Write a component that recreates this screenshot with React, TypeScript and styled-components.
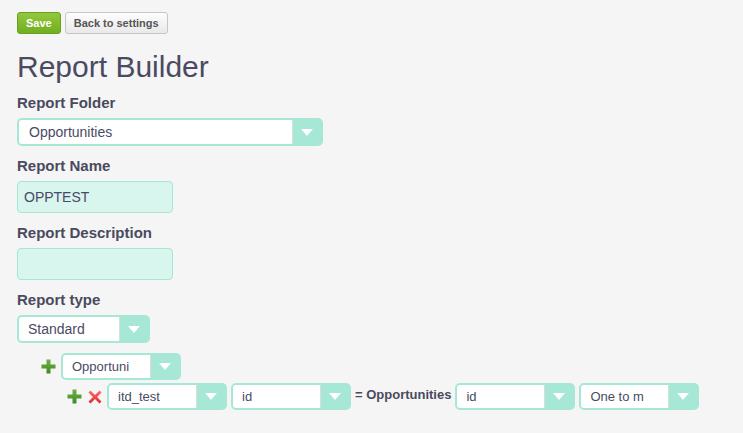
import styled, { createGlobalStyle } from 'styled-components'

const GlobalStyle = createGlobalStyle`
  html, body {
    margin: 0;
    background: #f5f5f5;
    font-family: "Liberation Sans", Arial, sans-serif;
    color: #4a4a62;
  }
`

const Page = styled.div`
  padding: 12px 17px;
`

const Toolbar = styled.div`
  display: flex;
  gap: 4px;
`

const Button = styled.button<{ $primary?: boolean }>`
  height: 22px;
  box-sizing: border-box;
  padding: 0 8px;
  border-radius: 3px;
  font-family: inherit;
  font-size: 11px;
  font-weight: 700;
  cursor: pointer;
  border: 1px solid ${({ $primary }) => ($primary ? '#6a9f1f' : '#c6c6c6')};
  color: ${({ $primary }) => ($primary ? '#ffffff' : '#555555')};
  background: ${({ $primary }) =>
    $primary
      ? 'linear-gradient(#93c83c, #72ad22)'
      : 'linear-gradient(#fdfdfd, #e9e9e9)'};
`

const Title = styled.h1`
  margin: 15px 0 0;
  font-size: 30px;
  line-height: 35px;
  font-weight: 400;
  color: #4a4a62;
`

const Field = styled.div`
  margin-top: 10px;

  & + & {
    margin-top: 11px;
  }
`

const Label = styled.label`
  display: block;
  font-size: 15px;
  line-height: 18px;
  font-weight: 700;
  color: #4a4a5e;
  margin-bottom: 6px;
`

const TextInput = styled.div`
  width: 156px;
  height: 32px;
  box-sizing: border-box;
  border: 1px solid #a6e6d4;
  border-radius: 4px;
  background: #d8f5ee;
  padding: 0 6px;
  display: flex;
  align-items: center;
  font-size: 14px;
  color: #4a4a66;
`

const SelectBox = styled.div<{ $w: number; $h: number }>`
  display: flex;
  flex: none;
  width: ${({ $w }) => $w}px;
  height: ${({ $h }) => $h}px;
  box-sizing: border-box;
  padding: 2px;
  border-radius: 5px;
  background: #a6e8d5;
`

const SelectValue = styled.div<{ $size: number; $pad: number }>`
  flex: 1;
  min-width: 0;
  display: flex;
  align-items: center;
  background: #ffffff;
  border-radius: 3px 0 0 3px;
  border-right: 1px solid #d9dedd;
  padding-left: ${({ $pad }) => $pad}px;
  font-size: ${({ $size }) => $size}px;
  color: #4a4a66;
  white-space: nowrap;
  overflow: hidden;
`

const SelectArrow = styled.div`
  width: 28px;
  display: flex;
  align-items: center;
  justify-content: center;

  &::after {
    content: '';
    border-left: 6.5px solid transparent;
    border-right: 6.5px solid transparent;
    border-top: 7px solid #ffffff;
  }
`

const Tree = styled.div`
  margin-top: 10px;
  display: flex;
  flex-direction: column;
  gap: 3px;
`

const TreeRow = styled.div<{ $indent: number }>`
  display: flex;
  align-items: center;
  gap: 4px;
  padding-left: ${({ $indent }) => $indent}px;
`

const Icons = styled.div`
  display: flex;
  align-items: center;
  gap: 6px;
  margin-right: 1px;
`

const Join = styled.span`
  font-size: 13px;
  font-weight: 700;
  color: #4a4a5e;
  margin: -4px 0 0;
`

const Select = ({
  value,
  width,
  height = 27,
  size = 13,
  pad = 9,
}: {
  value: string
  width: number
  height?: number
  size?: number
  pad?: number
}) => (
  <SelectBox $w={width} $h={height}>
    <SelectValue $size={size} $pad={pad}>
      {value}
    </SelectValue>
    <SelectArrow />
  </SelectBox>
)

const PlusIcon = () => (
  <svg width="15" height="15" viewBox="0 0 15 15">
    <defs>
      <linearGradient id="pg" x1="0" y1="0" x2="0" y2="1">
        <stop offset="0" stopColor="#6fb043" />
        <stop offset="1" stopColor="#3f8a26" />
      </linearGradient>
    </defs>
    <path d="M5.5 0.5h4v5h5v4h-5v5h-4v-5h-5v-4h5z" fill="url(#pg)" />
  </svg>
)

const RemoveIcon = () => (
  <svg width="14" height="14" viewBox="0 0 14 14">
    <defs>
      <linearGradient id="rg" x1="0" y1="0" x2="0" y2="1">
        <stop offset="0" stopColor="#ff6a6a" />
        <stop offset="1" stopColor="#e0282e" />
      </linearGradient>
    </defs>
    <path
      d="M2.5 0.5L7 5 11.5 0.5 13.5 2.5 9 7 13.5 11.5 11.5 13.5 7 9 2.5 13.5 0.5 11.5 5 7 0.5 2.5z"
      fill="url(#rg)"
    />
  </svg>
)

export default function App() {
  return (
    <Page>
      <GlobalStyle />
      <Toolbar>
        <Button $primary>Save</Button>
        <Button>Back to settings</Button>
      </Toolbar>
      <Title>Report Builder</Title>

      <Field>
        <Label>Report Folder</Label>
        <Select value="Opportunities" width={306} height={28} size={14} pad={10} />
      </Field>
      <Field>
        <Label>Report Name</Label>
        <TextInput>OPPTEST</TextInput>
      </Field>
      <Field>
        <Label>Report Description</Label>
        <TextInput />
      </Field>
      <Field>
        <Label>Report type</Label>
        <Select value="Standard" width={133} height={28} size={14} pad={9} />
      </Field>

      <Tree>
        <TreeRow $indent={24}>
          <Icons>
            <PlusIcon />
          </Icons>
          <Select value="Opportuni" width={120} />
        </TreeRow>
        <TreeRow $indent={50}>
          <Icons>
            <PlusIcon />
            <RemoveIcon />
          </Icons>
          <Select value="itd_test" width={120} />
          <Select value="id" width={120} />
          <Join>= Opportunities</Join>
          <Select value="id" width={120} />
          <Select value="One to m" width={120} />
        </TreeRow>
      </Tree>
    </Page>
  )
}
